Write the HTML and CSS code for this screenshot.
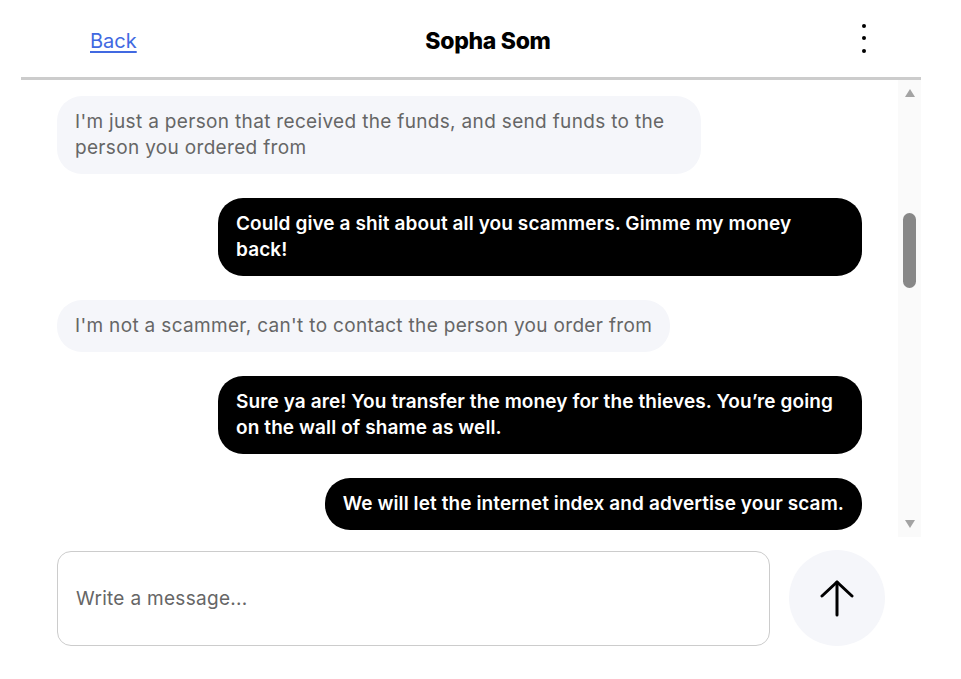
FILE: index.html
```html
<!DOCTYPE html>
<html lang="en">
<head>
<meta charset="utf-8">
<title>Sopha Som</title>
<link rel="stylesheet" href="styles.css">
</head>
<body>
<div class="app">
  <header class="header">
    <a class="back" href="#">Back</a>
    <h1 class="title">Sopha Som</h1>
    <button class="menu" aria-label="More">
      <span class="dot"></span><span class="dot"></span><span class="dot"></span>
    </button>
  </header>
  <div class="panel">
    <div class="messages">
      <div class="msg in">I'm just a person that received the funds, and send funds to the person you ordered from</div>
      <div class="msg out">Could give a shit about all you scammers. Gimme my money back!</div>
      <div class="msg in">I'm not a scammer, can't to contact the person you order from</div>
      <div class="msg out">Sure ya are! You transfer the money for the thieves. You’re going on the wall of shame as well.</div>
      <div class="msg out">We will let the internet index and advertise your scam.</div>
    </div>
    <div class="scrollbar">
      <span class="arrow up"></span>
      <div class="track"><span class="thumb"></span></div>
      <span class="arrow down"></span>
    </div>
  </div>
  <div class="composer">
    <div class="input">Write a message...</div>
    <button class="send" aria-label="Send">
      <svg width="34" height="38" viewBox="0 0 34 38" fill="none" stroke="#000" stroke-width="3" stroke-linecap="round" stroke-linejoin="round">
        <path d="M17 36V3"/>
        <path d="M2 17L17 3L32 17"/>
      </svg>
    </button>
  </div>
</div>
</body>
</html>
```
FILE: styles.css
```css
* { box-sizing: border-box; }
html, body { margin: 0; padding: 0; background: #fff; }
body { font-family: Inter, "Noto Sans", Arial, sans-serif; }

.app {
  width: 900px;
  margin-left: 21px;
}

.header {
  height: 80px;
  border-bottom: 3px solid #cccccc;
  display: grid;
  grid-template-columns: 1fr auto 1fr;
  align-items: center;
  padding-left: 34px;
  padding-top: 5px;
}
.back {
  justify-self: start;
  margin-left: 35px;
  color: #4169e1;
  font-size: 20px;
  text-decoration: underline;
  text-underline-offset: 3px;
}
.title {
  margin: 0;
  font-size: 23px;
  font-weight: 800;
  color: #000;
  letter-spacing: -0.3px;
}
.menu {
  justify-self: end;
  margin-right: 55px;
  border: 0;
  background: none;
  padding: 0;
  display: flex;
  flex-direction: column;
  gap: 8.5px;
  align-items: center;
  margin-top: -6px;
}
.dot {
  width: 4px; height: 4px;
  background: #000;
  border-radius: 50%;
}

.panel {
  height: 457px;
  display: flex;
  overflow: hidden;
}
.messages {
  flex: 1;
  padding: 16px 36px 0 36px;
  display: flex;
  flex-direction: column;
  gap: 24px;
}
.msg {
  max-width: 644px;
  padding: 13px 18px;
  font-size: 19px;
  line-height: 26px;
  border-radius: 25px;
}
.msg.in {
  align-self: flex-start;
  background: #f5f6fa;
  color: #666;
  letter-spacing: 0.33px;
}
.msg.out {
  align-self: flex-end;
  background: #000;
  color: #fff;
  font-weight: 600;
  letter-spacing: 0.1px;
}

.scrollbar {
  width: 23px;
  background: #fafafa;
  display: flex;
  flex-direction: column;
  align-items: center;
  padding: 9px 0 9px;
}
.arrow {
  width: 0; height: 0;
  border-left: 5.5px solid transparent;
  border-right: 5.5px solid transparent;
}
.arrow.up { border-bottom: 8px solid #a3a3a3; }
.arrow.down { border-top: 8px solid #a3a3a3; }
.track {
  flex: 1;
  width: 100%;
  display: flex;
  justify-content: center;
  padding-top: 116px;
}
.thumb {
  width: 13px;
  height: 75px;
  border-radius: 7px;
  background: #888;
}

.composer {
  display: flex;
  align-items: center;
  gap: 19px;
  padding: 13px 36px 0 36px;
}
.input {
  width: 713px;
  height: 95px;
  border: 1px solid #cccccc;
  border-radius: 14px;
  padding: 0 18px;
  display: flex;
  align-items: center;
  font-size: 19px;
  letter-spacing: 0.3px;
  color: #666;
}
.send {
  width: 96px;
  height: 96px;
  border-radius: 50%;
  border: 0;
  background: #f5f6fa;
  display: flex;
  align-items: center;
  justify-content: center;
  padding: 0;
}
```
